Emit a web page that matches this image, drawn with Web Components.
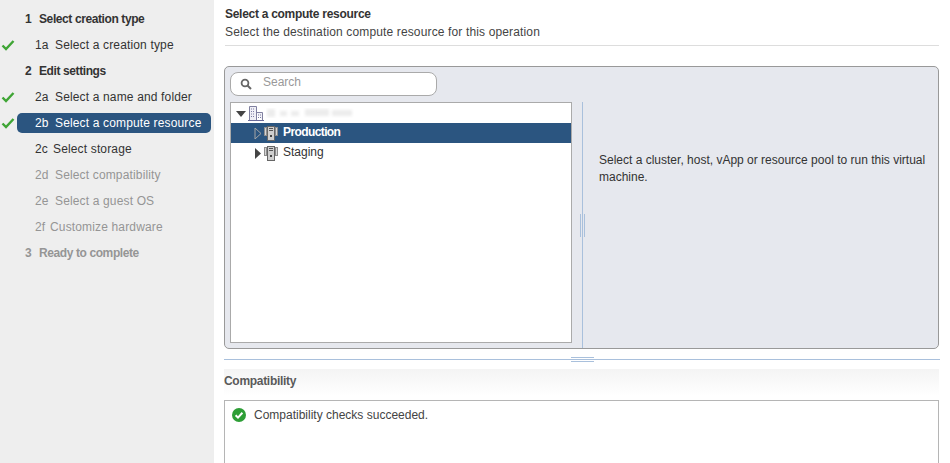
<!DOCTYPE html>
<html>
<head>
<meta charset="utf-8">
<title>Select a compute resource</title>
<style>
html, body { margin: 0; height: 463px; overflow: hidden; background: #fff; }
body { font: 12px "Liberation Sans", Arial, sans-serif; color: #333; display: flex; }
</style>
</head>
<body>
<wizard-nav>
  <nav-step num="1" level="top">Select creation type</nav-step>
  <nav-step num="1a" done>Select a creation type</nav-step>
  <nav-step num="2" level="top">Edit settings</nav-step>
  <nav-step num="2a" done>Select a name and folder</nav-step>
  <nav-step num="2b" done active>Select a compute resource</nav-step>
  <nav-step num="2c" numw="18">Select storage</nav-step>
  <nav-step num="2d" off>Select compatibility</nav-step>
  <nav-step num="2e" off>Select a guest OS</nav-step>
  <nav-step num="2f" numw="15" off>Customize hardware</nav-step>
  <nav-step num="3" level="top" off>Ready to complete</nav-step>
</wizard-nav>

<wizard-page>
  <page-head title="Select a compute resource" sub="Select the destination compute resource for this operation"></page-head>
  <resource-panel>
    <search-box slot="search"></search-box>
    <tree-view slot="tree">
      <tree-row kind="root" open></tree-row>
      <tree-row selected>Production</tree-row>
      <tree-row>Staging</tree-row>
    </tree-view>
    Select a cluster, host, vApp or resource pool to run this virtual machine.
  </resource-panel>
  <h-splitter></h-splitter>
  <compat-box>Compatibility checks succeeded.</compat-box>
</wizard-page>

<script>
function shadow(el, html) {
    el.attachShadow({mode: 'open'}).innerHTML = html
}

customElements.define('wizard-nav', class extends HTMLElement {
    constructor() {
        super()
        shadow(this, `
<style>
:host { display: block; flex: 0 0 214px; height: 463px; box-sizing: border-box; padding-top: 6px; background: #eee; }
</style>
<slot></slot>`)
    }
})

customElements.define('nav-step', class extends HTMLElement {
    constructor() {
        super()
        let top = this.getAttribute('level') == 'top'
        let off = this.hasAttribute('off')
        let active = this.hasAttribute('active')
        let done = this.hasAttribute('done')
        let numw = this.getAttribute('numw') || (top ? 14 : 20)
        let check = done ? `<svg width="14" height="12" viewBox="0 0 14 12"><path d="M1.5 6.5 5 10 12.5 2" fill="none" stroke="#3fa535" stroke-width="2.4"/></svg>` : ''
        shadow(this, `
<style>
:host { display: flex; height: 26px; align-items: center; }
.mark { flex: 0 0 17px; display: flex; padding-left: 1px; box-sizing: border-box; }
.pill {
  flex: 0 0 194px; height: 20px; box-sizing: border-box; border-radius: 5px;
  display: flex; align-items: center; white-space: nowrap;
  padding-left: ${top ? 8 : 18}px;
  font-weight: ${top ? 'bold' : 'normal'};
  letter-spacing: ${top ? '-0.4px' : '0.15px'};
  color: ${off ? '#959595' : '#333'};
  background: ${active ? '#2b5580' : 'none'};
}
:host([active]) .pill { color: #fff; }
.num { flex: 0 0 ${numw}px; }
</style>
<span class="mark">${check}</span>
<div class="pill"><span class="num">${this.getAttribute('num')}</span><slot></slot></div>`)
    }
})

customElements.define('wizard-page', class extends HTMLElement {
    constructor() {
        super()
        shadow(this, `
<style>
:host { display: block; flex: 1; min-width: 0; box-sizing: border-box; padding: 0 11px 0 10px; height: 463px; overflow: hidden; }
</style>
<slot></slot>`)
    }
})

customElements.define('page-head', class extends HTMLElement {
    constructor() {
        super()
        shadow(this, `
<style>
:host { display: block; box-sizing: border-box; height: 46px; margin: 0 0 20px 1px; padding-top: 5px; border-bottom: 1px solid #ddd; }
.t { font-weight: bold; line-height: 18px; color: #333; letter-spacing: -0.28px; }
.s { line-height: 18px; color: #444; letter-spacing: 0.14px; }
</style>
<div class="t">${this.getAttribute('title')}</div>
<div class="s">${this.getAttribute('sub')}</div>`)
        this.removeAttribute('title')
    }
})

customElements.define('resource-panel', class extends HTMLElement {
    constructor() {
        super()
        shadow(this, `
<style>
:host {
  display: grid; grid-template-columns: 342px 10px 1px 1fr; grid-template-rows: 30px 241px;
  box-sizing: border-box; height: 283px; padding: 5px 0 0 5px;
  background: #e6e8ee; border: 1px solid #999; border-radius: 5px;
}
.search { grid-column: 1 / 5; }
.split { grid-column: 3; height: 246px; background: #a9c0dc; position: relative; }
.grip { position: absolute; top: 112px; left: -2px; width: 3px; height: 23px; border: solid #a9c0dc; border-width: 0 1px; }
.msg { display: flex; align-items: center; padding: 0 10px 0 16px; line-height: 17px; color: #333; height: 134px; }
</style>
<div class="search"><slot name="search"></slot></div>
<slot name="tree"></slot>
<div></div>
<div class="split"><div class="grip"></div></div>
<div class="msg"><slot></slot></div>`)
    }
})

customElements.define('search-box', class extends HTMLElement {
    constructor() {
        super()
        shadow(this, `
<style>
:host {
  display: flex; align-items: center; width: 207px; height: 24px; box-sizing: border-box;
  background: #fff; border: 1px solid #aaa; border-radius: 8px; color: #999;
}
svg { margin: -1px 0 0 9px; }
span { margin: -4px 0 0 11px; }
</style>
<svg width="12" height="12" viewBox="0 0 12 12"><circle cx="5" cy="5" r="3.4" fill="none" stroke="#666" stroke-width="1.8"/><path d="M7.5 7.5 11 11" stroke="#666" stroke-width="2"/></svg>
<span>Search</span>`)
    }
})

customElements.define('tree-view', class extends HTMLElement {
    constructor() {
        super()
        shadow(this, `
<style>
:host { display: block; height: 241px; box-sizing: border-box; background: #fff; border: 1px solid #aaa; }
</style>
<slot></slot>`)
    }
})

const BUILDING = `<svg width="16" height="16" viewBox="0 0 16 16" style="margin:1px 0 0 0">
<path d="M1.5 14.5V0.5H8.5V14.5M8.5 6.5H14.5V14.5" fill="#f0f0f6" stroke="#8080a0"/>
<path d="M3 3H7M3 5.5H7M3 8H7M3 10.5H7M10 9H13M10 11.5H13" stroke="#7c7ca4" stroke-dasharray="1 1"/>
<path d="M0 14.5H16" stroke="#6a6a99"/></svg>`

const SERVERS = `<svg width="14" height="15" viewBox="0 0 14 15">
<rect x="0" y="1" width="4" height="9" fill="#8e8e8e"/>
<rect x="10" y="1" width="4" height="9" fill="#8e8e8e"/>
<rect x="1" y="2" width="1" height="7" fill="#d5d5d5"/>
<rect x="12" y="2" width="1" height="7" fill="#d5d5d5"/>
<rect x="3.5" y="0.5" width="7" height="14" fill="#cfcfcf" stroke="#666"/>
<path d="M5 2.5H9M5 4.5H9" stroke="#555"/><rect x="6" y="9" width="2" height="2" fill="#444"/></svg>`

customElements.define('tree-row', class extends HTMLElement {
    constructor() {
        super()
        let root = this.getAttribute('kind') == 'root'
        let sel = this.hasAttribute('selected')
        let arrow
        if (root) arrow = `<svg width="10" height="7" viewBox="0 0 10 7" style="margin:2px 2px 0 5px"><path d="M0 0H10L5 6Z" fill="#444"/></svg>`
        else if (sel) arrow = `<svg width="8" height="13" viewBox="0 0 8 13" style="margin:1px 2px 0 23px"><path d="M1 1 7 6.5 1 12Z" fill="#2b5580" stroke="#a5a5a5"/></svg>`
        else arrow = `<svg width="6" height="11" viewBox="0 0 6 11" style="margin:1px 3px 0 24px"><path d="M0 0 6 5.5 0 11Z" fill="#444"/></svg>`
        // the name of the root node is blurred out in the reference
        let smudge = `<svg width="140" height="14" viewBox="0 0 140 14" style="margin-left:2px"><defs><filter id="b"><feGaussianBlur stdDeviation="1.5"/></filter></defs><g fill="#ececec" filter="url(#b)"><rect x="1" y="3" width="8" height="8"/><rect x="14" y="5" width="7" height="5"/><rect x="25" y="5" width="8" height="5"/><rect x="39" y="3" width="24" height="7"/><rect x="66" y="4" width="20" height="6"/></g></svg>`
        shadow(this, `
<style>
:host {
  display: flex; align-items: center; height: 20px; white-space: nowrap; color: #333;
}
:host([selected]) { background: #2b5580; color: #fff; font-weight: bold; letter-spacing: -0.6px; }
.label { margin: -2px 0 0 5px; }
svg { flex: none; }
</style>
${arrow}${root ? BUILDING + smudge : SERVERS + '<span class="label"><slot></slot></span>'}`)
    }
})

customElements.define('h-splitter', class extends HTMLElement {
    constructor() {
        super()
        shadow(this, `
<style>
:host { display: flex; justify-content: center; position: relative; box-sizing: border-box; height: 1px; margin: 10px -1px 9px 0; background: #a9c0dc; }
.grip { position: absolute; left: 347px; top: -2px; width: 23px; height: 3px; border: solid #a9c0dc; border-width: 1px 0; }
</style>
<div class="grip"></div>`)
    }
})

customElements.define('compat-box', class extends HTMLElement {
    constructor() {
        super()
        shadow(this, `
<style>
:host { display: block; }
.head {
  height: 27px; line-height: 25px; margin-bottom: 4px; color: #5a5a5a; font-weight: bold; letter-spacing: -0.3px;
  background: linear-gradient(#f4f4f4, #fff);
}
.box {
  display: flex; gap: 8px; height: 90px; box-sizing: border-box;
  padding: 7px 0 0 7px; align-items: flex-start;
  border: 1px solid #b5b5b5; border-bottom: 0; color: #444;
}
.box span { line-height: 15px; }
</style>
<div class="head">Compatibility</div>
<div class="box">
  <svg width="14" height="14" viewBox="0 0 14 14"><circle cx="7" cy="7" r="7" fill="#2d9e36"/><path d="M3.6 7.2 6 9.6 10.4 4.8" fill="none" stroke="#fff" stroke-width="2"/></svg>
  <span><slot></slot></span>
</div>`)
    }
})
</script>
</body>
</html>
